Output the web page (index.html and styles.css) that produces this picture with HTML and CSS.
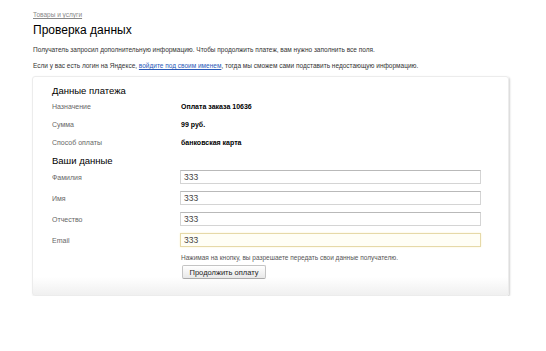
FILE: index.html
```html
<!DOCTYPE html>
<html lang="ru">
<head>
    <meta charset="UTF-8">
    <meta name="viewport" content="width=device-width, initial-scale=1.0">
    <title>Проверка данных</title>
    <link rel="stylesheet" href="styles.css">
</head>
<body>
    <div class="page">
        <a class="crumbs" href="#">Товары и услуги</a>
        <h1>Проверка данных</h1>
        <p class="intro">Получатель запросил дополнительную информацию. Чтобы продолжить платеж, вам нужно заполнить все поля.</p>
        <p class="intro second">Если у вас есть логин на Яндексе, <a href="#">войдите под своим именем</a>, тогда мы сможем сами подставить недостающую информацию.</p>

        <div class="card">
            <h2>Данные платежа</h2>
            <div class="info">
                <div class="label">Назначение</div>
                <div class="value">Оплата заказа 10636</div>
                <div class="label">Сумма</div>
                <div class="value">99 руб.</div>
                <div class="label">Способ оплаты</div>
                <div class="value">банковская карта</div>
            </div>

            <h2 class="second-title">Ваши данные</h2>
            <div class="fields">
                <label class="label">Фамилия</label>
                <input type="text" value="333">
                <label class="label">Имя</label>
                <input type="text" value="333">
                <label class="label">Отчество</label>
                <input type="text" value="333">
                <label class="label">Email</label>
                <input type="text" class="focused" value="333">
            </div>
            <div class="note">Нажимая на кнопку, вы разрешаете передать свои данные получателю.</div>
            <button class="pay-button">Продолжить оплату</button>
        </div>
    </div>
</body>
</html>
```

FILE: styles.css
```css
body {
    margin: 0;
    background-color: #ffffff;
    color: #000000;
    font-family: "Liberation Sans", Arial, sans-serif;
}
.page {
    padding: 10px 37px 0 33px;
}
.crumbs {
    display: block;
    font-size: 6.5px;
    line-height: 10px;
    color: #888888;
}
h1 {
    margin: 2px 0 0 0;
    font-size: 12px;
    line-height: 16px;
    font-weight: normal;
}
.intro {
    margin: 7px 0 0 0;
    font-size: 6.5px;
    line-height: 10px;
    color: #333333;
}
.intro.second {
    margin-top: 6px;
}
.intro a {
    color: #2a5ab8;
}
.card {
    margin: 5px 0 0 -1px;
    width: 456px;
    padding: 8px 0 16px 19px;
    border: 1px solid #ececec;
    border-radius: 3px;
    box-shadow: 1px 1px 2px rgba(0, 0, 0, 0.18);
    background: linear-gradient(to bottom, #ffffff 0, #ffffff 200px, #f0f0f0 100%);
}
h2 {
    margin: 0;
    font-size: 9.5px;
    line-height: 12px;
    font-weight: normal;
}
.second-title {
    margin-top: 4px;
}
.info {
    display: grid;
    grid-template-columns: 129px 1fr;
    grid-auto-rows: 18px;
    align-items: center;
    font-size: 7px;
}
.label {
    font-size: 7px;
    color: #666666;
}
.value {
    font-weight: bold;
    color: #000000;
}
.fields {
    margin-top: 3px;
    display: grid;
    grid-template-columns: 128px 301px;
    grid-auto-rows: 14px;
    row-gap: 7px;
    align-items: center;
}
.fields input {
    box-sizing: border-box;
    width: 301px;
    height: 14px;
    margin: 0;
    padding: 0 3px;
    border: 1px solid #d4d4d4;
    border-top-color: #b9b9b9;
    font-family: "Liberation Sans", Arial, sans-serif;
    font-size: 8.5px;
    color: #444444;
    background-color: #ffffff;
}
.fields input.focused {
    border-color: #e6d9a8;
    background-color: #fffef5;
    box-shadow: 0 0 2px #fbf3d0;
}
.note {
    margin: 6px 0 0 129px;
    font-size: 6.5px;
    line-height: 10px;
    color: #555555;
}
.pay-button {
    display: block;
    margin: 2px 0 0 130px;
    width: 84px;
    height: 14px;
    padding: 0;
    font-family: "Liberation Sans", Arial, sans-serif;
    font-size: 7.5px;
    color: #222222;
    border: 1px solid #c4c4c4;
    border-bottom-color: #aaaaaa;
    border-radius: 2px;
    background: linear-gradient(to bottom, #ffffff, #e8e8e8);
    cursor: pointer;
}
```
